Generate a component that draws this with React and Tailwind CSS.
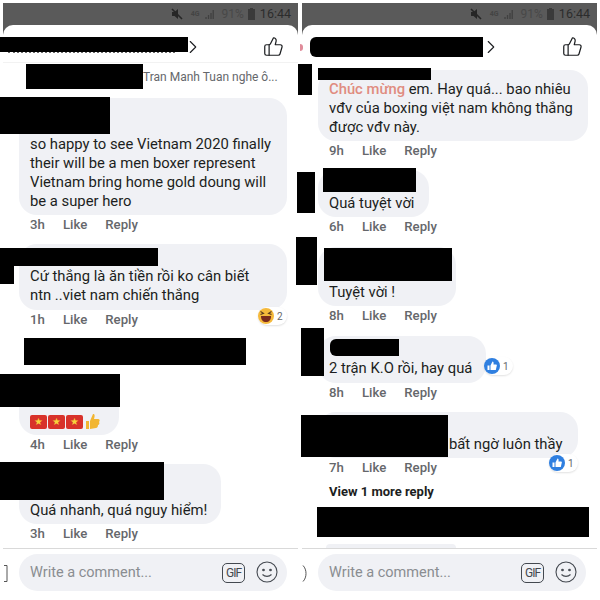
import { ChevronRight, ThumbsUp } from 'lucide-react';

const font = { fontFamily: 'Roboto, "Noto Sans", sans-serif' };

// black boxes that hide names in the screenshot, page coordinates
const redactions = [
  'left-0 top-[37px] w-[188px] h-[15px]',
  'left-[26px] top-[64px] w-[117px] h-[25px]',
  'left-0 top-[97px] w-[110px] h-[37px]',
  'left-0 top-[248px] w-[158px] h-[18px]',
  'left-0 top-[266px] w-[14px] h-[18px]',
  'left-[24px] top-[338px] w-[222px] h-[27px]',
  'left-0 top-[374px] w-[120px] h-[33px]',
  'left-0 top-[462px] w-[164px] h-[38px]',
  'left-[310px] top-[37px] w-[173px] h-[20px] rounded-l-md',
  'left-[298px] top-[64px] w-[14px] h-[31px]',
  'left-[318px] top-[68px] w-[113px] h-[12px]',
  'left-[297px] top-[172px] w-[18px] h-[41px]',
  'left-[323px] top-[168px] w-[93px] h-[24px]',
  'left-[296px] top-[237px] w-[21px] h-[48px]',
  'left-[324px] top-[248px] w-[128px] h-[33px]',
  'left-[301px] top-[328px] w-[23px] h-[48px]',
  'left-[330px] top-[339px] w-[69px] h-[17px] rounded-l-md',
  'left-[301px] top-[415px] w-[147px] h-[42px]',
  'left-[317px] top-[507px] w-[272px] h-[30px]',
];

const StatusBar = () => (
  <div className="h-[22px] bg-[#5a5a5a] flex items-center justify-end pr-[7px]">
    <svg width="12" height="12" viewBox="0 0 12 12" className="mr-[8px]">
      <path d="M1 4h2.5L7 1v10L3.5 8H1z" fill="#262626" />
      <path d="M1 1l10 10" stroke="#262626" strokeWidth="1.6" />
    </svg>
    <span className="text-[7px] font-bold text-[#444444] leading-none mr-[5px]">4G</span>
    <svg width="9" height="11" viewBox="0 0 9 11" className="mr-[8px]">
      <path d="M1 10V8M3.5 10V6M6 10V4M8.2 10V1" stroke="#404040" strokeWidth="1.3" />
    </svg>
    <span className="text-[12px] text-[#484848] mr-[4px]">91%</span>
    <svg width="7" height="12" viewBox="0 0 7 12" className="mr-[5px]">
      <path d="M2 0h3v1h2v11H0V1h2z" fill="#3a3a3a" />
    </svg>
    <span className="text-[12.5px] text-[#2c2c2c]">16:44</span>
  </div>
);

const Header = ({ chevronClass }) => (
  <div className="bg-[#5a5a5a]">
    <div className="h-[37px] flex items-center justify-between pr-[14px] rounded-t-[10px] bg-white">
      <ChevronRight size={22} strokeWidth={1.2} className={`text-[#1c1e21] mt-[6px] ${chevronClass}`} />
      <ThumbsUp size={21} strokeWidth={1.4} className="text-[#1c1e21] mt-[6px]" />
    </div>
  </div>
);

const Flag = () => (
  <span className="w-[17px] h-[14px] bg-[#d8322a] rounded-[2px] flex items-center justify-center text-[10px] leading-none text-[#f7d33c]">★</span>
);

const ThumbEmoji = () => (
  <svg width="15" height="17" viewBox="0 0 15 17" className="ml-[1px]">
    <path d="M1 8h3v8H1zM5 8l3-7c2 0 2 2 1 5h4c2 0 2 2 1 3 1 1 0 3-1 3 0 2-1 3-2 3l-6 1z" fill="#f2b632" />
  </svg>
);

const LaughEmoji = () => (
  <svg width="16" height="16" viewBox="0 0 16 16">
    <circle cx="8" cy="8" r="8" fill="#f5b93b" />
    <path d="M3 8h10c0 4-2 6-5 6s-5-2-5-6z" fill="#7a2a1c" />
    <path d="M2.5 3.5l3 1.8-3 1.2M13.5 3.5l-3 1.8 3 1.2" stroke="#5a3a1c" strokeWidth="1.1" fill="none" />
  </svg>
);

const LikeBadge = () => (
  <svg width="16" height="16" viewBox="0 0 16 16">
    <circle cx="8" cy="8" r="8" fill="#2f7fe0" />
    <path d="M3.5 7.5h2v4.5h-2zM6.5 7.5l2-4c1 0 1.3 1 1 3h2.6c.8 0 1 1 .6 1.5l-.9 4H6.5z" fill="#ffffff" />
  </svg>
);

const Reaction = ({ className, icon, count }) => (
  <div className={`absolute flex items-center gap-[3px] h-[18px] pr-[4px] bg-white rounded-full shadow-[0_1px_2px_rgba(0,0,0,0.12)] text-[10px] text-[#65676b] ${className}`}>
    {icon}
    <span>{count}</span>
  </div>
);

const Comment = ({ bubbleClass, lines, reaction, time, className = '' }) => (
  <div className={className}>
    <div className={`relative flex flex-col justify-end pl-[11px] pb-[4px] rounded-[18px] bg-[#f0f1f5] text-[14.8px] leading-[19px] text-[#1c1e21] ${bubbleClass}`}>
      {lines}
      {reaction}
    </div>
    <div className="h-[20px] pl-[11px] flex items-center gap-[18px] text-[13.2px] font-medium text-[#65676b]">
      <span className="w-[15px]">{time}</span>
      <span>Like</span>
      <span>Reply</span>
    </div>
  </div>
);

const InputBar = ({ edge }) => (
  <div className="h-[52px] border-t border-[#d9d9d9] flex items-start pt-[5px] relative">
    <svg width="5" height="17" viewBox="0 0 5 17" fill="none" stroke="#555555" strokeWidth="1" className="absolute left-0 top-[16px]">
      <path d={edge} />
    </svg>
    <div className="ml-[16px] w-[268px] h-[37px] rounded-full bg-[#f0f1f5] flex items-center pl-[11px] pr-[9px]">
      <span className="flex-1 pt-[1px] text-[14.5px] text-[#8a8d91]">Write a comment...</span>
      <span className="w-[23px] h-[20px] mr-[11px] border border-[#444950] rounded-[5px] flex items-center justify-center text-[12px] tracking-[-1px] text-[#444950]">GIF</span>
      <svg width="22" height="22" viewBox="0 0 22 22" fill="none" stroke="#444950" strokeWidth="1.1" className="-mt-[2px]">
        <circle cx="11" cy="11" r="10" />
        <circle cx="7.5" cy="9" r="0.8" fill="#444950" />
        <circle cx="14.5" cy="9" r="0.8" fill="#444950" />
        <path d="M6.5 13.5c2.5 2.5 6.5 2.5 9 0" />
      </svg>
    </div>
  </div>
);

const App = () => (
  <div className="relative w-[600px] h-[600px] bg-white overflow-hidden" style={font}>
    <div className="flex gap-[4px] px-[3px] pt-[3px]">
      {/* Left phone */}
      <div className="w-[295px] h-[597px] flex flex-col">
        <StatusBar />
        <Header chevronClass="ml-[179px]" />
        <div className="h-[26px] pl-[140px] flex items-center text-[12px] text-[#65676b] border-t border-[#f2f2f2] pt-[2px]">
          Tran Manh Tuan nghe ô...
        </div>
        <div className="flex-1 pt-[10px] pl-[16px] flex flex-col">
          <Comment
            bubbleClass="w-[268px] h-[117px]"
            time="3h"
            lines={
              <>
                <p>so happy to see Vietnam 2020 finally</p>
                <p>their will be a men boxer represent</p>
                <p>Vietnam bring home gold doung will</p>
                <p>be a super hero</p>
              </>
            }
          />
          <Comment
            className="mt-[9px]"
            bubbleClass="w-[268px] h-[66px]"
            time="1h"
            lines={
              <>
                <p className="-translate-y-px">Cứ thắng là ăn tiền rồi ko cân biết</p>
                <p className="-translate-y-px">ntn ..viet nam chiến thắng</p>
              </>
            }
            reaction={<Reaction className="left-[239px] top-[63px]" icon={<LaughEmoji />} count="2" />}
          />
          <Comment
            className="mt-[45px]"
            bubbleClass="w-[100px] h-[60px]"
            time="4h"
            lines={
              <div className="flex items-center gap-[1px] pb-[1px]">
                <Flag />
                <Flag />
                <Flag />
                <ThumbEmoji />
              </div>
            }
          />
          <Comment
            className="mt-[9px]"
            bubbleClass="w-[202px] h-[60px]"
            time="3h"
            lines={<p>Quá nhanh, quá nguy hiểm!</p>}
          />
        </div>
        <InputBar edge="M1 .5h3v16H1" />
      </div>

      {/* Right phone */}
      <div className="w-[295px] h-[597px] flex flex-col">
        <StatusBar />
        <Header chevronClass="ml-[178px]" />
        <div className="flex-1 pt-[8px] pl-[16px] flex flex-col relative">
          <Comment
            bubbleClass="w-[270px] h-[71px]"
            time="9h"
            lines={
              <>
                <p>
                  <span className="font-medium text-[#e08c80]">Chúc mừng</span> em. Hay quá... bao nhiêu
                </p>
                <p>vđv của boxing việt nam không thắng</p>
                <p>được vđv này.</p>
              </>
            }
          />
          <Comment
            className="mt-[9px]"
            bubbleClass="w-[111px] h-[47px]"
            time="6h"
            lines={<p>Quá tuyệt vời</p>}
          />
          <Comment
            className="mt-[10px]"
            bubbleClass="w-[138px] h-[59px]"
            time="8h"
            lines={<p>Tuyệt vời !</p>}
          />
          <Comment
            className="mt-[10px]"
            bubbleClass="w-[168px] h-[47px]"
            time="8h"
            lines={<p className="pb-[1px]">2 trận K.O rồi, hay quá</p>}
            reaction={<Reaction className="left-[166px] top-[21px]" icon={<LikeBadge />} count="1" />}
          />
          <Comment
            className="mt-[9px]"
            bubbleClass="w-[260px] h-[46px]"
            time="7h"
            lines={<p className="pl-[120px] whitespace-nowrap">bất ngờ luôn thầy</p>}
            reaction={<Reaction className="left-[231px] top-[42px]" icon={<LikeBadge />} count="1" />}
          />
          <div className="mt-[4px] pl-[11px] h-[20px] flex items-center text-[13px] font-bold text-[#1c1e21]">
            View 1 more reply
          </div>
          <div className="absolute left-[24px] bottom-0 w-[130px] h-[4px] rounded-t-[6px] bg-[#f0f1f5]" />
        </div>
        <InputBar edge="M1 .5c4 4 4 12 0 16" />
      </div>
    </div>

    {/* bits that stick out from behind the black boxes */}
    <div className="absolute left-[8px] top-[51px] w-[167px] border-b-2 border-dotted border-[#666666]" />
    <div className="absolute left-[300px] top-[44px] w-[3px] h-[7px] rounded-r-full bg-[#e08c9a]" />

    {redactions.map((box) => (
      <div key={box} className={`absolute bg-black ${box}`} />
    ))}
  </div>
);

export default App;
